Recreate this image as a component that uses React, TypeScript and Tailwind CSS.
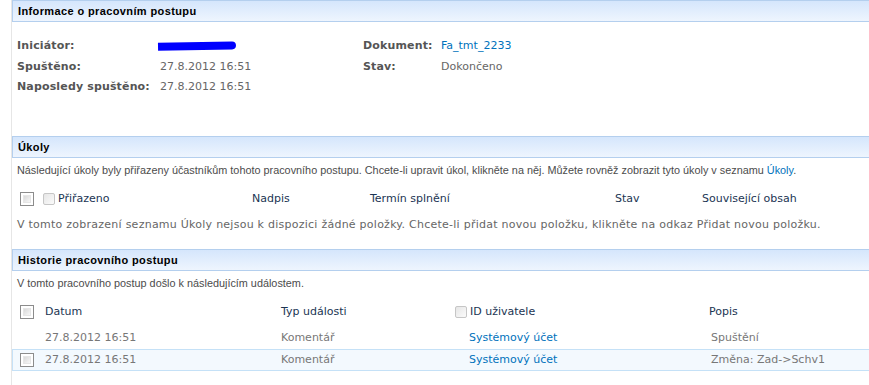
import React from "react";

const tahoma = "font-['Liberation_Sans',Arial,sans-serif]";
const verdana = "font-['DejaVu_Sans',Verdana,sans-serif]";

const SectionHeader = ({ title }: { title: string }) => (
  <div className="h-[22px] flex items-center pl-[5px] border-y border-l border-[#b4cfee] bg-gradient-to-b from-[#d5e6fc] to-[#eef5fe]">
    <span className={`${tahoma} text-[11px] font-bold tracking-[0.38px] text-black`}>{title}</span>
  </div>
);

const Check = () => (
  <span className="inline-block w-[14px] h-[14px] border border-[#8c8c8c] bg-white p-[2px]">
    <span className="block w-full h-full bg-gradient-to-br from-[#d9d9d9] to-[#f7f7f7] border border-[#e6e6e6]" />
  </span>
);

const DisabledCheck = () => (
  <span className="inline-block w-[12px] h-[12px] rounded-[2px] border border-[#c6c6c6] bg-gradient-to-br from-[#e6e6e6] to-[#fbfbfb]" />
);

const label = `${verdana} h-[20.5px] leading-[20.5px] text-[11px] font-bold tracking-[0.15px] text-[#555]`;
const cell = `${verdana} h-[20.5px] leading-[20.5px] text-[11px]`;

const history = [
  { date: "27.8.2012 16:51", type: "Komentář", user: "Systémový účet", desc: "Spuštění", selected: false },
  { date: "27.8.2012 16:51", type: "Komentář", user: "Systémový účet", desc: "Změna: Zad->Schv1", selected: true },
];

const App = () => {
  return (
    <div className="flex min-h-[385px] w-[869px] bg-white overflow-hidden">
      <div className="w-[12px] shrink-0 border-r border-[#e6e6e6]" />
      <div className="flex-1">
        {/* Informace */}
        <div className="h-[136px]">
          <SectionHeader title="Informace o pracovním postupu" />
          <div className="pt-[14px] pl-[5px] flex">
            <div className="w-[143px]">
              {["Iniciátor:", "Spuštěno:", "Naposledy spuštěno:"].map((l) => (
                <div key={l} className={label}>
                  {l}
                </div>
              ))}
            </div>
            <div className="w-[203px]">
              <div className="h-[20.5px] flex items-center">
                <span className="block w-[78px] h-[8px] bg-[#0000ff] rounded-r-full -rotate-1 ml-[-2px]" />
              </div>
              <div className={`${cell} text-[#666]`}>27.8.2012 16:51</div>
              <div className={`${cell} text-[#666]`}>27.8.2012 16:51</div>
            </div>
            <div className="w-[78px]">
              <div className={label}>Dokument:</div>
              <div className={label}>Stav:</div>
            </div>
            <div>
              <div className={`${cell} text-[#0072bc]`}>Fa_tmt_2233</div>
              <div className={`${cell} text-[#666]`}>Dokončeno</div>
            </div>
          </div>
        </div>

        {/* Úkoly */}
        <div className="h-[113px]">
          <SectionHeader title="Úkoly" />
          <div className={`${tahoma} h-[24px] leading-[24px] pl-[5px] text-[10.85px] text-[#4c4c4c] whitespace-nowrap`}>
            Následující úkoly byly přiřazeny účastníkům tohoto pracovního postupu. Chcete-li upravit úkol, klikněte na něj. Můžete rovněž zobrazit tyto úkoly v seznamu{" "}
            <span className="text-[#0072bc]">Úkoly</span>.
          </div>
          <div className={`${verdana} h-[34px] flex items-center text-[11px] text-[#1b3553]`}>
            <div className="w-[31px] pl-[8px] flex items-center"><Check /></div>
            <div className="w-[209px] flex items-center gap-[3px]">
              <DisabledCheck />
              <span>Přiřazeno</span>
            </div>
            <div className="w-[118px]">Nadpis</div>
            <div className="w-[245px]">Termín splnění</div>
            <div className="w-[87px]">Stav</div>
            <div>Související obsah</div>
          </div>
          <div className={`${verdana} pl-[5px] pt-[2px] text-[11px] tracking-[0.25px] text-[#666] leading-[14px] whitespace-nowrap`}>
            V tomto zobrazení seznamu Úkoly nejsou k dispozici žádné položky. Chcete-li přidat novou položku, klikněte na odkaz Přidat novou položku.
          </div>
        </div>

        {/* Historie */}
        <div>
          <SectionHeader title="Historie pracovního postupu" />
          <div className={`${tahoma} h-[24px] leading-[24px] pl-[5px] text-[10.85px] text-[#4c4c4c]`}>
            V tomto pracovního postup došlo k následujícím událostem.
          </div>
          <div className={`${verdana} h-[30px] mt-[2px] flex items-center text-[11px] text-[#1b3553]`}>
            <div className="w-[33px] pl-[8px] flex items-center"><Check /></div>
            <div className="w-[236px]">Datum</div>
            <div className="w-[174px]">Typ události</div>
            <div className="w-[254px] flex items-center gap-[3px]">
              <DisabledCheck />
              <span>ID uživatele</span>
            </div>
            <div>Popis</div>
          </div>
          {history.map((r, i) => (
            <div
              key={i}
              className={`${verdana} h-[22px] flex items-center text-[11px] text-[#777] border-y ${
                r.selected ? "bg-[#f3f9fe] border-[#c5e1f7] shadow-[inset_1px_0_0_#c5e1f7]" : "border-transparent"
              }`}
            >
              <div className="w-[33px] pl-[8px] flex items-center">{r.selected && <Check />}</div>
              <div className="w-[236px]">{r.date}</div>
              <div className="w-[174px]">{r.type}</div>
              <div className="w-[256px] pl-[14px] text-[#0072bc]">{r.user}</div>
              <div>{r.desc}</div>
            </div>
          ))}
        </div>
      </div>
    </div>
  );
};

export default App;
